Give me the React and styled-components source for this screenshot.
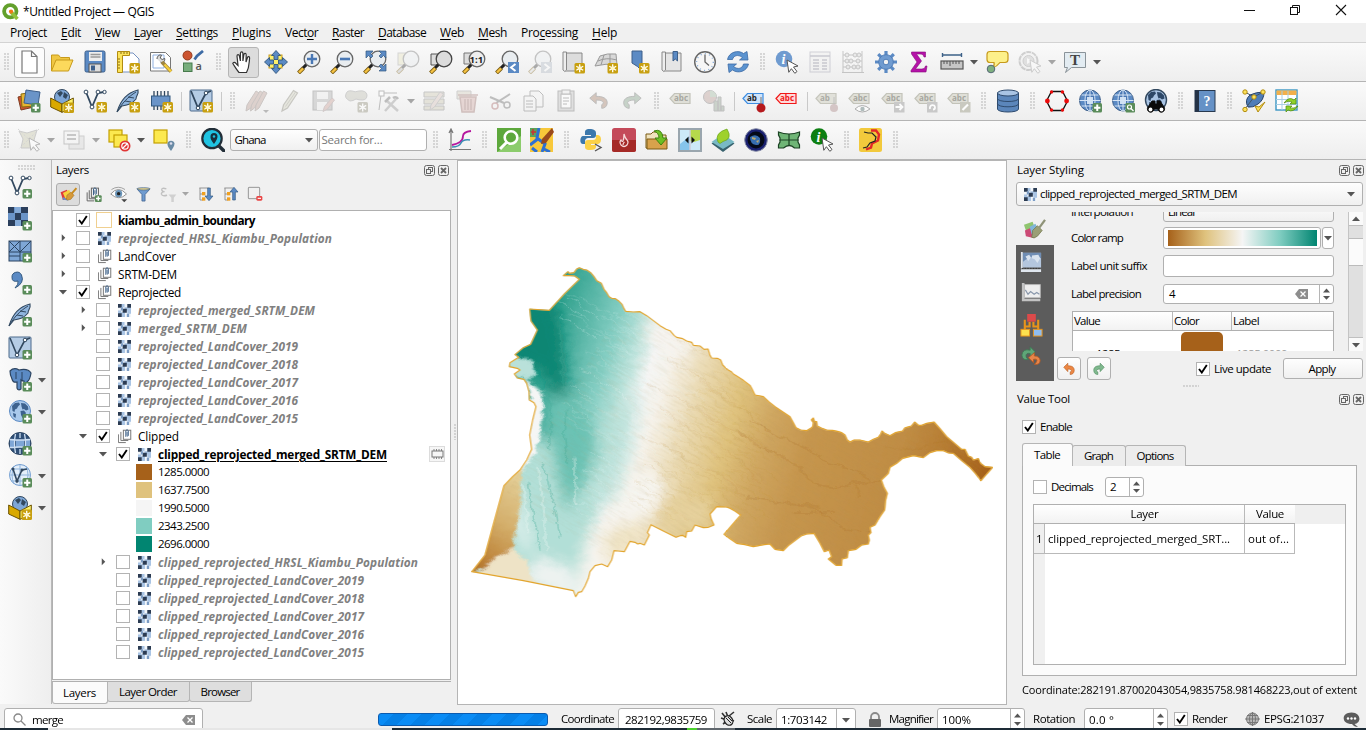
import React, { useLayoutEffect, useRef, useState } from "react";
import styled, { createGlobalStyle, css } from "styled-components";

const UI = `"Open Sans", "Noto Sans", sans-serif`;

const Global = createGlobalStyle`
  * { box-sizing: border-box; }
  body { margin: 0; background: #f0f0f0; font-family: ${UI}; font-size: 11.5px; line-height: 16px; color: #000; overflow: hidden; }
  svg { display: block; flex: none; }
`;

/* Text that is tracked to a given width, as the desktop font metrics are tighter. */
const FitSpan = styled.span`
  display: inline-block;
  flex: none;
  justify-self: start;
  white-space: pre;
  font-size: ${(p) => p.$size || 11.5}px;
  font-weight: ${(p) => (p.$bold ? 700 : 400)};
  font-style: ${(p) => (p.$italic ? "italic" : "normal")};
  color: ${(p) => p.$color || "inherit"};
  text-decoration: ${(p) => (p.$under ? "underline" : "none")};
  text-underline-offset: 2px;
`;

function Fit({ w, children, ...rest }) {
  const ref = useRef(null);
  const [track, setTrack] = useState(0);
  useLayoutEffect(() => {
    const el = ref.current;
    const n = el.textContent.length;
    setTrack((w - el.getBoundingClientRect().width) / n);
  }, [w]);
  return (
    <FitSpan ref={ref} {...rest} style={{ letterSpacing: track }}>
      {children}
    </FitSpan>
  );
}

/* ---------- icons ---------- */
const Star = ({ x = 13.5, y = 13 }) => (
  <g transform={`translate(${x} ${y})`}>
    <rect width="10.5" height="10.5" rx="1.5" fill="#c8a010" stroke="none" />
    <path d="M5.2 1.3v8M1.800 3.200l6.900 4M1.800 7.200l6.900-4" stroke="#fff" strokeWidth="1.3" />
    <circle cx="5.2" cy="5.2" r="1.9" fill="#fff6c8" stroke="none" />
  </g>
);
const Plus = ({ x = 14.5, y = 14 }) => (
  <g transform={`translate(${x} ${y})`}>
    <rect width="9.5" height="9.5" rx="1.5" fill="#5a8c5a" stroke="none" />
    <path d="M4.75 1.6v6.3M1.6 4.75h6.3" stroke="#fff" strokeWidth="2" />
  </g>
);
const Lens = ({ fill = "#e9edf0", stroke = "#666", handle = "#f5c242" }) => (
  <g>
    <path d="M1.5 23l5-5" stroke="#7a5c10" strokeWidth="4" />
    <path d="M2 22.500l4.500-4.500" stroke={handle} strokeWidth="2.4" />
    <path d="M6 18l3.600-3.600" stroke="#222" strokeWidth="3" />
    <circle cx="15" cy="9" r="7.8" fill={fill} stroke={stroke} strokeWidth="1.3" />
  </g>
);
const Arrow = ({ c = "#fff", s = "#555" }) => (
  <path d="M12 10l11 6-4.500 1 3.500 4.500-2.200 1.800-3.400-4.600-2.600 3.600z" fill={c} stroke={s} strokeWidth="1" />
);
const Globe = ({ r = 10.5 }) => (
  <g fill="none" stroke="#d5e4f5" strokeWidth="1">
    <circle cx="12" cy="11.5" r={r} fill="#5b8ac4" stroke="#3d5f8a" />
    <ellipse cx="12" cy="11.5" rx={r * 0.48} ry={r} fill="#4a78b4" />
    <path d="M9 8h6v7H9z" fill="#cfe0f3" stroke="none" />
    <path d={`M12 ${11.5 - r}v${2 * r}M${12 - r} 11.5h${2 * r}M3.500 6h17M3.500 17h17`} />
  </g>
);
const Continents = ({ c = "#2d4767" }) => (
  <path d="M4 6l3-3 4-.5 1 2-2 2-1 2-2 1-.5 2.500-2-1zM13 3l4 .5 3 3 .5 3-2.500 1-2-1.500-1.500.5-1-3zM12.500 11l3.500-.5 2 2.500-2 4-1.500 1-1.500-3zM5 13l3 1-.5 4-2-1.500z" fill={c} />
);
const Vec = ({ s = "#32485f" }) => (
  <g stroke={s} fill="#fff">
    <path d="M3 3l6 15 6-14 6-1" fill="none" strokeWidth="1.8" />
    <circle cx="3" cy="3" r="1.900" /><circle cx="9" cy="18" r="1.900" /><circle cx="15" cy="3" r="1.900" /><circle cx="21.500" cy="3" r="1.700" />
  </g>
);
const Feather = () => (
  <g>
    <path d="M1 23C4 13 9 4 22 1c1 4-2 6-2 9-4 5-8 6-14 7z" fill="#8fb4dd" stroke="#32485f" strokeWidth="1.1" />
    <path d="M1 23C6 14 12 8 20 3M9 12l6 1M12 8l6 1" stroke="#32485f" fill="none" />
  </g>
);
const Tag = ({ t = "abc", c = "#d9d9cf", s = "#b3b3a6", f = "#8d8d83" }) => (
  <g>
    <path d="M1 9.500L5.500 4.500H21v10H5.500z" fill={c} stroke={s} strokeWidth="1.200" />
    <text x="5" y="12.300" fontSize="8" fontWeight="700" fontFamily="Open Sans" fill={f}>{t}</text>
  </g>
);
const Folder = () => (
  <g stroke="#c79a1b">
    <path d="M1.500 21V5h7l2 2.500h9V11" fill="#f0c742" />
    <path d="M1.500 21L6 10h17l-4.500 11z" fill="#fcd95c" />
  </g>
);
const GeoBox = ({ badge = true }) => (
  <g>
    <circle cx="12" cy="8" r="7.500" fill="#7ea6d6" stroke="#32485f" />
    <path d="M7 4l4-2 2 2-3 4zM14 3l4 3-2 4-3-2z" fill="#32485f" />
    <path d="M0.700 9l11.300 6v8.300L.7 18z" fill="#d9a900" stroke="#6b5200" />
    <path d="M23.300 9L12 15v8.300L23.300 18z" fill="#fdf06a" stroke="#6b5200" />
    {badge && <Star x={13.500} y={13.500} />}
  </g>
);
const Raster = () => (
  <g>
    <rect width="14" height="14" fill="#f3f7fb" />
    <path d="M3.500 0H7v3.500H3.500zM7 3.500h7v3.500H7zM0 7h3.500v3.500H0zM3.500 9h4V14h-4zM10 7h4v3.500h-4z" fill="#a9c4e4" />
    <path d="M0 0h4v4H0zM10 0h4v4h-4zM0 10h4v4H0zM5 5h4.500v4.500H5z" fill="#2b3b52" />
    <path d="M3 3.500h2.500V7H3zM9.500 10.500H12V14H9.500z" fill="#7c9cc4" />
  </g>
);

const ICONS = {
  newdoc: <path d="M5 1h9.500L20 6.500V23H5zM14.500 1v5.500H20" fill="#fff" stroke="#777" strokeWidth="1.200" />,
  open: <Folder />,
  save: (
    <g><rect x="2" y="1" width="20" height="21" rx="1.500" fill="#5b8ac4" stroke="#3d5f8a" /><rect x="6" y="2" width="13" height="9" fill="#eee" /><path d="M7.500 4.500h10M7.500 7h10" stroke="#999" strokeWidth="1.400" /><rect x="6" y="14" width="12" height="8" fill="#ddd" stroke="#555" /><rect x="8" y="15.500" width="4" height="5" fill="#3d5f8a" /></g>
  ),
  layout: (
    <g><path d="M3 3h14l6 6v13H3z" fill="#fff" stroke="#7591c0" /><path d="M1.500 1.500h12v4h-7v17h-5z" fill="#fce45c" stroke="#b28c10" /><path d="M5 2v2M8 2v2M11 2v2M2 9h2M2 12h2M2 15h2M2 18h2" stroke="#8a6d10" /><Star /></g>
  ),
  layouts: (
    <g><path d="M1.500 2.500h15l5 5V21h-20z" fill="#fff" stroke="#777" /><path d="M4 5h11v13H4z" fill="none" stroke="#8fb0e0" /><path d="M8 9c0-3.500 3-4.500 4.500-3.800L11.200 8l2 1.500 2.500-1c.5 3-2 4.500-4.200 3.700" fill="#ddd" stroke="#555" /><path d="M13 12l9 9.500" stroke="#a08640" strokeWidth="3.800" /><path d="M15.500 14.500l6.500 7" stroke="#f6cf3c" strokeWidth="2.200" /></g>
  ),
  style: (
    <g><circle cx="5.500" cy="5.500" r="4.500" fill="#cc5430" stroke="#93391c" /><rect x="1.500" y="13" width="8.500" height="8.500" fill="#78ad7c" stroke="#477a4c" /><path d="M12.500 9.500l2.500-3.500L21 1" stroke="#3d6ba5" strokeWidth="2.800" fill="none" /><text x="13.500" y="19.500" fontSize="11" fontWeight="600" fontFamily="Open Sans" fill="#555">a</text></g>
  ),
  pan: <path d="M8 22.500C5 19 3.500 16 1.800 13.500c.5-1.700 2.400-1.300 3.700.5L7 15.500 6 6c.1-1.800 2-1.800 2.400 0l1 5V3.200c.2-1.900 2.400-1.800 2.500 0V11l1-6.500c.4-1.700 2.400-1.400 2.300.4L15 12l1.500-4.500c.6-1.500 2.300-1 2.100.6C18 13 18.500 17 15.500 22.500z" fill="#fff" stroke="#333" strokeWidth="1.200" />,
  pansel: (
    <g><rect x="5" y="5" width="13" height="13" fill="#fdf06a" stroke="#c79a1b" /><path d="M12 .5l4.500 5H14v4h-4v-4H7.500zM12 23.500l4.500-5H14v-4h-4v4H7.500zM.5 12l5-4.500V10h4v4h-4v2.500zM23.500 12l-5-4.500V10h-4v4h4v2.500z" fill="#5b8ac4" stroke="#32587f" strokeWidth=".9" /></g>
  ),
  zin: <g><Lens /><path d="M15 4v10M10 9h10" stroke="#4a78b4" strokeWidth="2.400" /></g>,
  zout: <g><Lens /><path d="M10 9h10" stroke="#4a78b4" strokeWidth="2.600" /></g>,
  zfull: <g><Lens /><path d="M3 1h7L7.500 3.500 10 6 8 8 5.500 5.500 3 8zM23 1h-7l2.500 2.500L16 6l2 2 2.500-2.500L23 8zM23 21h-7l2.500-2.500L16 16l2-2 2.500 2.500L23 14z" fill="#5b8ac4" stroke="#32587f" strokeWidth=".7" /></g>,
  zselD: <g opacity=".35"><rect x="2" y="3" width="10" height="12" fill="#e5e2b8" stroke="#999" /><Lens handle="#bbb" /></g>,
  zlayer: <g><path d="M2 4h9v11H2z" fill="#ddd" stroke="#555" /><Lens fill="#dcdcdc" stroke="#444" /></g>,
  znative: <g><path d="M2 3h9v11H2z" fill="#ddd" stroke="#777" /><Lens fill="#eee" /><text x="7.500" y="12.500" fontSize="9.500" fontWeight="700" fontFamily="Open Sans" fill="#222">1:1</text></g>,
  zlast: <g><Lens /><rect x="13" y="12" width="11" height="11" fill="#5b8ac4" /><path d="M20.500 14l-4.500 3.500 4.500 3.500" stroke="#fff" fill="none" strokeWidth="2" /></g>,
  znextD: <g opacity=".35"><Lens handle="#ddd" /><rect x="13" y="12" width="11" height="11" fill="#aab4c0" /><path d="M16.500 14l4.500 3.500-4.500 3.500" stroke="#fff" fill="none" strokeWidth="2" /></g>,
  newmap: <g stroke="#888"><path d="M5.500 3H21v18H4z" fill="#ddd" /><path d="M2 2h3.500v18q-1.500 3-3.500 0z" fill="#eee" /><Star /></g>,
  map3d: <g stroke="#999" fill="#d8d8d8"><path d="M6 6q7-3 16-2l1 11q-11-2-22 1z" /><path d="M4 11q8-4 19-1M10 5L7 15M16 4v10" fill="none" /><Star /></g>,
  bookmark: <g><path d="M5 1h10v20l-4.500-4.500L5 13z" fill="#5b8ac4" stroke="#3d5f8a" /><Star x={12} /></g>,
  bookmarks: <g><path d="M5.500 3H21v18H3.500" fill="#e5e5e5" stroke="#888" /><path d="M2 2h3.500v18q-1.500 3-3.500 0z" fill="#eee" stroke="#888" /><path d="M13 1.500h4.500V11l-2.200-2-2.300 2z" fill="#5b8ac4" stroke="#3d5f8a" /></g>,
  clock: <g><circle cx="12" cy="12" r="10.300" fill="#f6f6f6" stroke="#666" strokeWidth="1.400" /><circle cx="12" cy="12" r="8.300" fill="none" stroke="#7ea6d6" strokeDasharray="1 3.300" strokeWidth="1.200" /><path d="M12 4.500V12l4 3.500" stroke="#666" fill="none" strokeWidth="1.300" /></g>,
  refresh: <g fill="#5b93d0" stroke="#3d6ba5" strokeWidth=".8"><path d="M1.500 9.500C3 2 12-.5 17.500 3.500L21 1.500 22 10h-8.500l3-2.500C12 4 7.500 5.500 6.500 9.500zM22.500 14C21 21.500 12 24 6.500 20L3 22.500 2 14h8.500l-3 2.500c4.500 3.500 9 2 10-2.500z" /></g>,
  info: <g><circle cx="9" cy="9" r="8.300" fill="#6f9bd0" /><text x="6.500" y="14" fontSize="14" fontStyle="italic" fontWeight="700" fontFamily="Liberation Serif" fill="#fff">i</text><Arrow /></g>,
  tableD: <g opacity=".4"><rect x="2" y="2" width="20" height="20" fill="#eee" stroke="#99a" /><path d="M2 6h20M5 10h6M5 13h6M5 16h6M5 19h6M14 10h5M14 13h5M14 16h5M14 19h5" stroke="#889" strokeWidth="1.300" /></g>,
  abacusD: <g opacity=".5" fill="none" stroke="#999"><path d="M2 1v22M21 1v22M1 22.500h22M2 5h19M2 11h19M2 17h19" /><g fill="#ddd"><circle cx="6" cy="5" r="2" /><circle cx="14" cy="5" r="2" /><circle cx="18" cy="5" r="2" /><circle cx="6" cy="11" r="2" /><circle cx="10" cy="11" r="2" /><circle cx="17" cy="11" r="2" /><circle cx="7" cy="17" r="2" /><circle cx="13" cy="17" r="2" /><circle cx="17" cy="17" r="2" /></g></g>,
  gear: <g><path d="M12 1v22M1 12h22M4.200 4.200l15.600 15.600M19.800 4.200L4.200 19.800" stroke="#5b8ac4" strokeWidth="3.200" /><circle cx="12" cy="12" r="7.300" fill="#6f9bd0" stroke="#4f7db8" /><circle cx="12" cy="12" r="2.800" fill="#f2f2f2" stroke="#4f7db8" /></g>,
  sigma: <path d="M4.500 2h14v5h-1.500c-.5-2-1.500-3-4-3H9.500L14.500 11 8.500 19h6c2.500 0 3.500-1 4-3h1.500L19 22H4v-1.500L10 12 4.500 4z" fill="#b512a8" stroke="#840b7b" strokeWidth=".6" />,
  measure: <g><path d="M2 5h20M2.500 3v4M21.500 3v4" stroke="#3d6188" strokeWidth="1.400" /><rect x="1" y="11" width="22" height="8" fill="#c6c6c6" stroke="#555" strokeWidth="1.200" /><path d="M4 11v3M7 11v3M10 11v5M13 11v3M16 11v3M19 11v3" stroke="#555" /></g>,
  tips: <g><path d="M5 1.500h15q3 0 3 3v5q0 3-3 3h-5q-3 4-8 6 3-3 2-6H5q-3 0-3-3v-5q0-3 3-3z" fill="#fdf08a" stroke="#c79a1b" strokeWidth="1.200" /><circle cx="6" cy="19" r="3.800" fill="#7eb07e" stroke="#567" /></g>,
  actionD: <g opacity=".35"><circle cx="10.500" cy="11" r="9" fill="#eee" stroke="#888" strokeWidth="2" strokeDasharray="5 .7" /><circle cx="10.500" cy="11" r="5.500" fill="#bbb" stroke="#888" /><path d="M9 8l5 3-5 3z" fill="#fff" /><Arrow s="#888" /></g>,
  annot: <g><path d="M1.500 2.500h21v15h-14l-6 5 2-5h-3z" fill="#e3ecf2" stroke="#8a9399" /><text x="7" y="15" fontSize="15" fontFamily="Liberation Serif" fontWeight="700" fill="#444">T</text></g>,

  datasrc: <g><path d="M1 8l13-3 3 13-13 3z" fill="#cc5430" stroke="#7d3c20" /><path d="M4 5l13-2 1 14-13 1z" fill="#e5b432" stroke="#8a6d10" /><path d="M9 1l14 2-2 13-14-2z" fill="#6a94c8" stroke="#3d5f8a" /><Plus x={14} /></g>,
  geopkg: <GeoBox />,
  shp: <g><Vec /><Star /></g>,
  spatialite: <g><Feather /><Star /></g>,
  memory: <g><path d="M5 2v19M8.500 2v19M12 2v19M15.500 2v19M19 2v19" stroke="#32485f" strokeWidth="1.300" /><rect x="2.500" y="7" width="18.500" height="10" fill="#6a94c8" stroke="#32587f" /><Star /></g>,
  mesh: <g><rect x="1" y="1" width="22" height="21" rx="1" fill="#b5cce5" stroke="#4c6a8c" /><path d="M2 2l7 17 8-15 5-2" stroke="#32485f" fill="none" strokeWidth="1.800" /><circle cx="9" cy="19" r="1.800" fill="#fff" stroke="#32485f" /><circle cx="17" cy="4" r="1.800" fill="#fff" stroke="#32485f" /><Star /></g>,
  meshp: <g><rect x="1" y="1" width="22" height="21" rx="1" fill="#b5cce5" stroke="#4c6a8c" /><path d="M2 2l7 17 8-15 5-2" stroke="#32485f" fill="none" strokeWidth="1.600" /><circle cx="9" cy="19" r="1.800" fill="#fff" stroke="#32485f" /><circle cx="17" cy="4" r="1.800" fill="#fff" stroke="#32485f" /><Plus /></g>,
  pencilsD: <g opacity=".45" fill="#c3a8a0" stroke="#9a8f8a"><path d="M1 22l1-6L11 2l4 2.500L6 19z" /><path d="M5.500 22l1-6L15 2l3.500 2L9.500 19z" /><path d="M10 22l1-6L18.500 2 22 4 14 19z" /><path d="M18 21h6l-3 3z" fill="#777" stroke="none" /></g>,
  pencilD: <g opacity=".6"><path d="M4 22l1.500-6L15.500 1.500l4 2.500L9.500 19z" fill="#dcdccf" stroke="#aaa9a0" strokeWidth="1.200" /><path d="M7.500 17.500L17.500 3" stroke="#b9b9ae" /></g>,
  saveD: <g opacity=".45"><rect x="2" y="2" width="19" height="19" fill="#b5b5b5" stroke="#888" /><rect x="6" y="3" width="11" height="7" fill="#eee" /><rect x="6" y="13" width="10" height="8" fill="#eee" /><path d="M12 22.500l1.500-5L21 9l2.500 2-7 9z" fill="#d0aaa2" stroke="#a99" /></g>,
  polyD: <g opacity=".5"><path d="M2 5q1-4 6-3 3 1.500 7 0 7-1 8 4 0 5-5 5-3 0-6-1-3 2-6 2-6-3-4-7z" fill="#c9c9bf" stroke="#aaa" /><rect x="13.500" y="13" width="10.500" height="10.500" rx="1.500" fill="#a5a393" /><path d="M18.700 14.500v8M15.300 16.400l6.900 4M15.300 20.400l6.900-4" stroke="#fff" strokeWidth="1.400" /></g>,
  vertexD: <g opacity=".5" fill="none" stroke="#888"><path d="M5 4h15M4 6l-2 15" /><rect x="2" y="2" width="5" height="5" fill="#fff" /><path d="M8 22L19 10M10 12l11 10" strokeWidth="2.500" stroke="#aaa" /><path d="M8 13l5-5M16 9q3-2 5 1" strokeWidth="2.500" /></g>,
  modifyD: <g opacity=".5"><path d="M2 3h20v5H2zM2 10h20v5H2zM2 17h20v4H2z" fill="#d5d2c0" stroke="#999" /><path d="M8 21l1-5 9-13 3.500 2-9 13z" fill="#dcccc6" stroke="#aaa" /></g>,
  trashD: <g opacity=".5"><path d="M2 2h14v8H2z" fill="#dad6c8" stroke="#aaa" /><path d="M3 6h20M5 8h16l-2 15H7z" fill="#d9b9b5" stroke="#b08f8b" strokeWidth="1.500" /><path d="M10 10v11M13 10v11M16 10v11" stroke="#b08f8b" strokeWidth="1.500" /></g>,
  cutD: <g opacity=".5" stroke="#888" fill="none"><path d="M2 8l14 6M22 5L8 14" strokeWidth="2" /><circle cx="19" cy="16" r="3" strokeWidth="1.500" /><circle cx="7" cy="17" r="3" strokeWidth="1.500" stroke="#b88" /></g>,
  copyD: <g opacity=".5" fill="#f4f4f4" stroke="#888"><path d="M9 2h9l4 4v12H9z" /><path d="M3 7h9l3 3v12H3z" /><path d="M5 12h7M5 15h7M5 18h7" /></g>,
  pasteD: <g opacity=".5" stroke="#888"><rect x="4" y="2" width="16" height="20" fill="#ccc" /><rect x="7" y="5" width="10" height="14" fill="#fff" /><path d="M9 9h6M9 12h6M9 15h4" /><rect x="8" y="1" width="8" height="4" fill="#eee" /></g>,
  undoD: <path d="M3 10l7-6v4c7 0 12 2 12 7 0 4-3 6-6 6v-4c3-1 3-5-6-5v4z" transform="scale(.92)" fill="#d4c5bc" stroke="#bbb" />,
  redoD: <path d="M23 10l-7-6v4C9 8 4 10 4 15c0 4 3 6 6 6v-4c-3-1-3-5 6-5v4z" transform="scale(.92)" fill="#c6d2c8" stroke="#bbb" />,
  tagD: <g opacity=".75"><Tag /></g>,
  chartD: <g opacity=".55"><circle cx="8" cy="8" r="6.500" fill="#c9b3ae" stroke="#999" /><path d="M8 8V1.500A6.500 6.500 0 0 1 14.500 8z" fill="#b7c9b7" /><path d="M12 12h4v10h-4zM16 8h3v14h-3zM19 17h3v5h-3z" fill="#aab8aa" stroke="#999" /></g>,
  tagB: <g><Tag t="ab" c="#cfe4fb" s="#3f8de0" f="#222" /><path d="M19 8v9" stroke="#999" strokeWidth="1.500" /><circle cx="19" cy="19" r="4.500" fill="#b5191d" /></g>,
  tagR: <Tag c="#ffd9d9" s="#f01818" f="#f01818" />,
  tagPinD: <g opacity=".7"><Tag t="ab" /><path d="M19 8v9" stroke="#aaa" /><circle cx="19" cy="19" r="4" fill="#c8b3b3" /></g>,
  tagEyeD: <g opacity=".75"><Tag /><path d="M7 20q7-7 15 0-8 6-15 0z" fill="#fff" stroke="#999" /><circle cx="14.500" cy="20" r="2.200" fill="#9aa" /></g>,
  tagMoveD: <g opacity=".75"><Tag /><rect x="13" y="13" width="10.500" height="10.500" fill="#bbb" /><path d="M14.500 18h7m-3-3l3 3-3 3" stroke="#fff" fill="none" strokeWidth="1.800" /></g>,
  tagRotD: <g opacity=".75"><Tag /><rect x="13" y="13" width="10.500" height="10.500" fill="#bbb" /><path d="M16 20c-1-5 5-5 5-1.500 0 2-2 2-2 2" stroke="#fff" fill="none" strokeWidth="1.800" /></g>,
  tagEditD: <g opacity=".75"><Tag /><rect x="13" y="13" width="10.500" height="10.500" fill="#bcbcaf" /><path d="M15.500 21l5.500-5.500" stroke="#fff" strokeWidth="2.200" /></g>,
  db: <g stroke="#2f4b6e"><path d="M1.500 4v16c0 4 21 4 21 0V4z" fill="#5b86bb" /><ellipse cx="12" cy="4" rx="10.500" ry="3" fill="#a9c4e4" /><path d="M1.500 9.500c0 4 21 4 21 0M1.500 14.800c0 4 21 4 21 0" fill="none" /></g>,
  hex: <g><path d="M6.500 2.500h11L22.500 12l-5 9.500h-11L1.500 12z" fill="none" stroke="#111" strokeWidth="1.300" /><g fill="#ec0b0b"><circle cx="2.400" cy="12" r="2.400" /><circle cx="21.600" cy="12" r="2.400" /><circle cx="6.500" cy="3" r="1.700" /><circle cx="17.500" cy="3" r="1.700" /><circle cx="6.500" cy="21" r="1.700" /><circle cx="17.500" cy="21" r="1.700" /></g></g>,
  globeP: <g><Globe /><Plus /></g>,
  globeS: <g><Globe /><rect x="14.500" y="14" width="9.500" height="9.500" rx="1" fill="#5a8c5a" /><circle cx="18.500" cy="18" r="2" fill="none" stroke="#fff" strokeWidth="1.200" /><path d="M20 19.500l2.500 2.500" stroke="#fff" strokeWidth="1.200" /></g>,
  globeBin: <g><circle cx="12" cy="11" r="10.500" fill="#a9c4e4" stroke="#32485f" strokeWidth="1.400" /><Continents /><path d="M8 12h3v3h2v-3h3l4 6a3.300 3.300 0 1 1-6 2h-4a3.300 3.300 0 1 1-6-2z" fill="#0a0a0a" stroke="#0a0a0a" /><circle cx="6.500" cy="20.500" r="1.900" fill="#fff" /><circle cx="17.500" cy="20.500" r="1.900" fill="#fff" /></g>,
  help: <g><rect x="2" y="1.500" width="20" height="21" fill="#6591c6" stroke="#28394f" /><path d="M2 1.500h4v21H2z" fill="#243246" /><text x="10.500" y="17" fontSize="14" fontWeight="700" fontFamily="Liberation Serif" fill="#fff">?</text></g>,
  topo: <g><path d="M6 18q-4-7 2-12 6-3 14-3 0 8-6 12-5 4-10 3z" fill="#4f7db8" stroke="#28436a" /><path d="M3 3l9 5 9-5M3 20l9-12" stroke="#456" fill="none" /><g fill="#fde25c" stroke="#b28c10"><circle cx="3" cy="3" r="2.200" /><circle cx="21" cy="3" r="2.200" /><circle cx="12" cy="8" r="2.200" /><circle cx="3" cy="20.500" r="2.200" /><path d="M13 17l3 6 7-10-6 5z" /></g></g>,
  tableRef: <g><rect x="1" y="1" width="21" height="20" fill="#fff" stroke="#3b96c4" strokeWidth="1.400" /><path d="M1.500 1.500h20V6h-20z" fill="#f2b04b" /><path d="M1 10.500h21M1 15.500h21M7 2v19M13 2v19" stroke="#a9cfe4" /><path d="M9 14q5-7 10-3l2-2v6h-6l2-2q-4-2-8 1zM23 17q-5 7-10 4l-2 2v-6h6l-2 2q4 1 8-2z" fill="#8fd12a" stroke="#4d8a10" strokeWidth=".7" /></g>,

  selD: <g opacity=".55"><path d="M2 3l8 2 10-3-3 10 3 8H4l2-9z" fill="#d2d2bd" stroke="#aaa" /><path d="M1 1l22 21M22 1L2 21" stroke="#bbb" strokeDasharray="2 2" /><Arrow s="#888" /></g>,
  selvalD: <g opacity=".5"><rect x="7" y="8" width="15" height="13" fill="#ddd" stroke="#aaa" /><rect x="2" y="3" width="15" height="13" fill="#f4f4f4" stroke="#999" /><path d="M5 7h9M5 11h9" stroke="#999" strokeWidth="2" /></g>,
  desel: <g><rect x="2" y="2" width="13" height="12" fill="#fce94f" stroke="#c4a000" strokeWidth="1.200" /><rect x="7" y="7" width="13" height="12" fill="#fce94f" stroke="#c4a000" strokeWidth="1.200" /><circle cx="18" cy="18" r="5.500" fill="#e03535" /><circle cx="18" cy="18" r="3.200" fill="none" stroke="#fff" strokeWidth="1.200" /><path d="M15.500 20.500l5-5" stroke="#fff" strokeWidth="1.200" /></g>,
  selloc: <g><rect x="2" y="2" width="13" height="13" fill="#fce94f" stroke="#c4a000" strokeWidth="1.200" /><path d="M19 23q-4-5-3.500-7.500a3.600 3.600 0 0 1 7 0q0 2.500-3.500 7.500z" fill="#6a8ba5" /><circle cx="19" cy="15.500" r="1.300" fill="#dde" /></g>,
  osm: <g><circle cx="11" cy="10.500" r="9.700" fill="#1fc3e2" stroke="#222e38" strokeWidth="2.200" /><path d="M18 18l6 6" stroke="#222e38" strokeWidth="3.400" /><path d="M13 16q-4-5-3.500-7.500a3.500 3.500 0 0 1 7 0q0 2.500-3.500 7.500z" fill="#17303d" /><circle cx="13" cy="8.500" r="1.200" fill="#1fc3e2" /></g>,
  plot: <g fill="none"><path d="M3 23V1M1 21.500h22M1 5l2-4 2 4" stroke="#777" strokeWidth="1.200" /><path d="M4 17q5-1 8-3t3-6 8-5" stroke="#b5179e" strokeWidth="1.800" /><path d="M4 19q7 0 9-4t9-3" stroke="#3b8fb5" strokeWidth="1.600" /></g>,
  gsearch: <g><rect width="24" height="24" fill="#5da83c" /><path d="M0 24L24 8v16z" fill="#8ccc6c" /><circle cx="14" cy="9.500" r="6.300" fill="none" stroke="#fff" strokeWidth="2.600" /><path d="M9.500 14.500L3 21" stroke="#fff" strokeWidth="3" /></g>,
  osmdl: <g><rect width="23" height="24" fill="#f8c83a" /><path d="M0 0h8v9H0z" fill="#5ba35b" /><path d="M1 4h5M3 1v6" stroke="#c33" strokeWidth="1.500" /><path d="M9 0l-2 10 8 6-3 8M0 17l9-7" stroke="#2d70d2" strokeWidth="3" fill="none" /><path d="M2 20l5 4M14 21l6 3" stroke="#2d70d2" strokeWidth="3" /><path d="M22 0L12 11l-1 5 5-1L24 4z" fill="#99491c" /></g>,
  python: <g><path d="M11 1c-5 0-5 2-5 4v2h6v1H4c-3 0-4 8 0 8h2v-3c0-2 2-3 3-3h5c2 0 3-1 3-3V5c0-3-3-4-6-4z" fill="#3c78ac" /><path d="M11 22c-5 0-5-2-5-4v-3c0-2 1-3 3-3h5c2 0 3-1 3-3V7h2c4 0 4 9 0 9h-7v1h5v2c0 2-2 3-6 3z" fill="#fbd146" /><path d="M16 16l6 3.500-6 3.500" stroke="#555" fill="none" strokeWidth="1.400" /></g>,
  fire: <g><rect width="24" height="24" rx="2.500" fill="#c44a5a" /><path d="M0 12h24v9.500q0 2.500-2.500 2.500h-19Q0 24 0 21.500z" fill="#a52a26" /><path d="M12 6q1 4 3 6t0 5q-3 3-6 0-2-3 0-5 1 2 2 1 1-3 1-7zM11 17q0-2 1.500-3" stroke="#f7dcdc" fill="none" strokeWidth="1.200" /></g>,
  importf: <g stroke="#7a5a14"><path d="M1 20V6h5l2-2h7v3h6v13z" fill="#efe2bd" /><path d="M2 21V11h20v10z" fill="#d8a24c" /><path d="M9 3q8-3 9 7h4l-6 7-6-7h4q0-5-5-7z" fill="#6cc024" stroke="#3f8210" /></g>,
  swipe: <g><rect x="1" y="1" width="22" height="22" fill="#cde9f8" stroke="#9aa6ae" strokeWidth="2" /><path d="M2 16L12 8v14H2z" fill="#86c4ec" /><path d="M12 2h10v10l-6 2-4-1z" fill="#b6d94c" /><path d="M12 2v20" stroke="#ccd" strokeWidth="1.500" /><path d="M10.500 8.500v7L7 12zM13.500 8.500v7l3.500-3.500z" fill="#111" /></g>,
  leaf: <g><path d="M12 9l11.500 6.500L12 24 .5 15.500z" fill="#38626e" /><path d="M12 6l11.500 8L12 21 .5 14z" fill="#79b9c4" /><path d="M7 14Q3 5 16 1q6 10-4 12.500l-3 2z" fill="#9ed12c" stroke="#5d9c12" strokeWidth=".6" /></g>,
  earth: <g><circle cx="12" cy="12" r="11.300" fill="#1a2070" stroke="#8a90a8" /><circle cx="12" cy="12" r="8.500" fill="#050a18" /><path d="M6 9q6-4 10 1 1 8-4 7-6-1-6-8z" fill="#376eaf" /><path d="M8 9l4 1-1 2-3-1zM12 13l3-1-1 3z" fill="#b7a873" /></g>,
  bridge: <g fill="#6fb576" stroke="#1c4224" strokeWidth="1.200"><path d="M1.500 4q5 2 10.500 2t10.500-2v3l-1.500 3v4l1.500 3v3h-5q-5-5-11 0h-5v-3L3 14v-4L1.500 7z" /><path d="M2.500 12h19M12 6v11" fill="none" /></g>,
  infoG: <g><circle cx="9" cy="8.500" r="8.300" fill="#0d7f12" /><text x="6.500" y="13.500" fontSize="14" fontStyle="italic" fontWeight="700" fontFamily="Liberation Serif" fill="#fff">i</text><Arrow /></g>,
  route: <g><rect width="23" height="24" rx="2.500" fill="#f2c93c" /><path d="M12 2.500h5l3 4-1 6-6 3-1 4-5 2" stroke="#e22828" strokeWidth="2.400" fill="none" /><path d="M5 4l4 1h4l4 4-1 4-5 2-3 4-4 1" stroke="#222" strokeWidth="1.200" fill="none" /></g>,

  vecp: <g><Vec /><Plus /></g>,
  rastp: <g><path d="M0 0h20v19H0z" fill="#6a94c8" /><path d="M0 0h6v6H0zM13 0h7v6h-7zM7 6h6v7H7zM0 13h7v6H0zM13 13h7v6h-7z" fill="#2b3f5c" /><path d="M7 0h6v6H7zM7 13h6v6H7z" fill="#85abd8" /><Plus /></g>,
  meshl: <g stroke="#2b4360"><rect x="1" y="2" width="22" height="20" fill="#7ea6d6" /><path d="M1 13h22M12 2v20M1 2l11 11M12 2L1 13M23 2L12 13M1 17h11" fill="none" /><Plus /></g>,
  csv: <g><path d="M4 6.500a5 5 0 0 1 9.500-2.500q3.500 8-6.500 13 4-4 3-7-6 1.500-6-3.500z" fill="#5b8ac4" stroke="#32587f" /><Plus /></g>,
  feap: <g><Feather /><Plus /></g>,
  pg: <g><path d="M2 3q4-4 9-1 9-2 12 3-1 7-4 9v6h-3V13q-2 0-3-1v9q-3 2-4-1v-6q-4 1-5-3-2-4-2-8z" fill="#5b8ac4" stroke="#2b4360" strokeWidth="1.200" /><path d="M8 4v7M14 4v8" stroke="#2b4360" /><Plus /></g>,
  wms: <g><circle cx="12" cy="11" r="10.500" fill="#a9c9ec" stroke="#5b8ac4" /><Continents c="#3d628f" /><Plus /></g>,
  wcs: <g><circle cx="12" cy="11.500" r="11" fill="#2f4f77" stroke="#2b4360" /><path d="M8 8h8v7H8zM2 8h5v7H2zM17 8h5v7h-5z" fill="#7ea6d6" /><path d="M1.500 7.500q10 1 21 0M1.500 15.500q10-1 21 0M12 1v5M12 17v5M7.500 2q-2 9 0 19M16.500 2q2 9 0 19" stroke="#cfe0f3" fill="none" strokeWidth="1.300" /><Plus /></g>,
  wfs: <g><circle cx="12" cy="11" r="10.500" fill="#e4effa" stroke="#6f9bd0" /><path d="M1 11h22M12 1v21M3 5h18M3 17h18M6 2q-4 9 0 18M18 2q4 9 0 18" stroke="#8fb4dd" fill="none" /><path d="M5 5l4 12 5-11 5-1" stroke="#32485f" strokeWidth="1.600" fill="none" /><circle cx="5" cy="5" r="1.500" fill="#32485f" /><circle cx="9" cy="17" r="1.700" fill="#32485f" /><circle cx="14" cy="6" r="1.500" fill="#32485f" /><Plus /></g>,

  brush: <g><path d="M2 9l8-3 4 10-9 3z" fill="#e03a3a" /><path d="M6 15l-2 3 8 2z" fill="#5f8fd0" /><path d="M5 10l8-4 3 8-8 3z" fill="#f7d13c" /><path d="M10 13l5-4 4 4-4 5q-5 2-6 0 1-2 1-5z" fill="#d79a3a" stroke="#9a6c20" strokeWidth=".7" /><path d="M16 11l6-7" stroke="#c98a1c" strokeWidth="2.400" /></g>,
  brushG: <g><path d="M1 7l9-3 3 8-9 4z" fill="#8fc56f" /><path d="M2 13l7-3 3 11-9-2z" fill="#cc4a76" /><path d="M7 9l6-3 3 7-7 4z" fill="#7fb5d8" /><path d="M10 13l5-5 5 5-5 6q-4 3-6 1 1-3 1-7z" fill="#9a9f76" stroke="#74784f" strokeWidth=".8" /><path d="M17 10l6-8" stroke="#8f9378" strokeWidth="2.400" /></g>,
  group: <g fill="none" stroke="#777" strokeWidth="1.200"><path d="M1.500 9v10h9M4.500 6v10.500h9" /><rect x="7.500" y="4" width="9" height="11" /><path d="M10.500 12V4.500q1.500-2.500 3 0v6q-1 2-1.500-.5V6" stroke="#3d6188" /></g>,
  groupp: <g><g fill="none" stroke="#666" strokeWidth="1.400"><path d="M3 9v12h10M6 6v12h10" /><rect x="9" y="3" width="10" height="13" /><path d="M12 13V4q2-3 4 0v7q-1 2-2-.5V6" stroke="#3d6188" /></g><Plus x={14} y={13} /></g>,
  eye: <g><path d="M1 12q10-12 21 0-10 10-21 0z" fill="#fff" stroke="#888" strokeWidth="1.200" /><circle cx="11.500" cy="11.500" r="4.800" fill="#6a94b8" /><circle cx="11.500" cy="11.500" r="2.300" fill="#222" /><path d="M2 6q9-6 18 0" stroke="#888" fill="none" /><path d="M15 19h8l-4 4z" fill="#444" /></g>,
  filter: <g><path d="M1.500 3L9.500 12v10.500h5V12l8-9z" fill="#6f9bd0" stroke="#3d628f" strokeWidth="1.200" /><ellipse cx="12" cy="3" rx="10.500" ry="2" fill="#d9c98a" stroke="#3d628f" /></g>,
  epsD: <g opacity=".45"><path d="M9 4Q2 2 2.500 5.500 3 8 6.500 8 1.500 8.500 2 11.500 3 15 10 13" stroke="#888" strokeWidth="2" /><path d="M12 12h11l-3.500 4.500v6h-3.500v-6z" fill="#aaa" /></g>,
  expand: <g><path d="M2 3h14M3 3v18h4M3 12h4" stroke="#888" fill="none" strokeWidth="1.300" /><rect x="6" y="9" width="5" height="5" fill="#f0a020" /><rect x="6" y="17" width="5" height="5" fill="#f0a020" /><path d="M14.500 3h4v12h4L16.500 22l-6-7h4z" fill="#5b8ac4" stroke="#32587f" /></g>,
  collapse: <g><path d="M2 3h14M3 3v18h4M3 12h4" stroke="#888" fill="none" strokeWidth="1.300" /><rect x="6" y="9" width="5" height="5" fill="#f0a020" /><rect x="6" y="17" width="5" height="5" fill="#f0a020" /><path d="M14.500 21h4V9h4L16.500 2l-6 7h4z" fill="#5b8ac4" stroke="#32587f" /></g>,
  remove: <g><rect x="2" y="2" width="17" height="17" rx="1" fill="none" stroke="#888" strokeWidth="1.300" /><rect x="14" y="15" width="9" height="7" rx="2" fill="#e84545" /><path d="M16 18.500h5" stroke="#fff" strokeWidth="1.700" /></g>,
  transp: <g><rect x="3" y="2" width="20" height="16" fill="#b4c6de" /><path d="M3 2h20v6Q12 4 3 12z" fill="#6f8db4" /><path d="M6 6l4-2 2 3-3 4zM13 5l7-1 2 4-3 5-3-4-3-1z" fill="#d9e3ef" /><path d="M1 1h2v18H1zM1 20h22v3H1z" fill="#dfe6ee" /><path d="M2 19h20" stroke="#333" strokeDasharray="1.500 1.500" /></g>,
  histo: <g><path d="M1 1h3v18h18v3H1z" fill="#c3c3c3" /><rect x="4" y="3" width="18" height="15" fill="#eee" stroke="#bbb" /><path d="M5 9l3 5 3-3 4 3 3-2 3 2" fill="none" stroke="#8896aa" strokeWidth="1.300" /></g>,
  render3: <g><path d="M10 8v5H5v4M14 8v5h5v4M5 6v9M19 6v9" stroke="#e8941a" strokeWidth="2.200" fill="none" /><rect x="7.500" y="0" width="9" height="8" fill="#dc4a4a" /><rect x="1" y="16" width="9" height="7" fill="#fce04f" stroke="#e8941a" /><rect x="14" y="16" width="9" height="7" fill="#8fbdf0" stroke="#e8941a" /></g>,
  hist2: <g><path d="M1 11q1-8 10-6V1l6 6-6 6V9q-5-1-5 3 0 3 3 4-7 2-8-5z" fill="#5fa678" stroke="#3d7a53" /><path d="M23 17q-1-5-7-5V8l-7 6 6 6v-4q5-1 4 2-1 3-3 4 7 1 7-5z" fill="#e8854a" stroke="#b55a24" /></g>,
  undo: <path d="M3 9l7-7v4.500c7 0 11 2 11 8 0 4-3 7-7 7V17c3 0 4-5-4-5v4.500z" fill="#ec8643" stroke="#b55f25" />,
  redo: <path d="M21 9l-7-7v4.500c-7 0-11 2-11 8 0 4 3 7 7 7V17c-3 0-4-5 4-5v4.500z" fill="#7fb88e" stroke="#4c8a5c" />,
};

const Icon = ({ n, s = 24 }) => (
  <svg width={s} height={s} viewBox="0 0 24 24" fill="none">{ICONS[n]}</svg>
);

const Tri = ({ c = "#555", w = 8, dir = "down" }) => {
  const d = { down: "M0 1h8L4 5.500z", up: "M0 5h8L4 .5z", right: "M2 -1v8l4-4z" }[dir];
  return <svg width={w} height={w * 0.75} viewBox="0 0 8 6" overflow="visible"><path d={d} fill={c} /></svg>;
};

/* ---------- frame ---------- */
const Window = styled.div`width: 1366px; height: 730px; display: flex; flex-direction: column; background: #f0f0f0; overflow: hidden;`;
const TitleBar = styled.header`height: 23px; background: #fff; display: flex; align-items: center; padding-left: 2px; flex: none;`;
const WinButtons = styled.div`margin-left: auto; display: flex; align-items: center; gap: 34px; padding-right: 19px; height: 21px; margin-top: -3px;`;
const MenuBar = styled.nav`height: 20px; display: flex; gap: 14px; padding: 2px 10px 0; border-bottom: 1px solid #d3d3d3; flex: none;`;
const Bar = styled.div`
  height: 39px; flex: none; display: flex; align-items: center;
  background: linear-gradient(#fafafa, #eeeeee); border-bottom: 1px solid #b4b4b4;
`;
const dots = css`
  background-image: radial-gradient(circle at 1px 1px, #b4b4b4 0.5px, transparent 0.9px);
  background-size: 3px 3px;
`;
const HandleBox = styled.div`width: ${(p) => p.$w || 16}px; flex: none; display: flex; justify-content: center; &::before { content: ""; width: 5px; height: 18px; ${dots} }`;
const Tool = styled.div`
  width: 33px; height: 31px; flex: none; display: grid; place-items: center;
  ${(p) => p.$frame && css`border: 1px solid #b5b5b5; border-radius: 3px; width: 31px; margin: 0 1px; background: ${p.$frame};`}
`;
const Drop = styled.div`width: ${(p) => p.$w || 12}px; flex: none; display: flex; justify-content: center; padding-right: 2px;`;
const Sep = styled.div`width: 7px; flex: none; height: 19px; display: flex; justify-content: center; &::before { content: ""; width: 1px; background: #c9c9c9; }`;
const Field = styled.div`
  height: ${(p) => p.$h || 22}px; width: ${(p) => p.$w}px; flex: none; border: 1px solid #b0b0b0; border-radius: 3px;
  background: ${(p) => (p.$btn ? "linear-gradient(#fefefe,#f0f0f0)" : "#fff")};
  display: flex; align-items: center; justify-content: ${(p) => p.$justify || "space-between"}; padding: ${(p) => p.$pad || "0 4px"};
`;

const Toolbar = ({ items }) => (
  <Bar>
    <HandleBox $w={12.5} />
    {items.map((it, i) => {
      if (it === "|") return <Sep key={i} />;
      if (it === "::") return <HandleBox key={i} />;
      if (it === "v" || it === "V") return <Drop key={i}><Tri c={it === "v" ? "#a5a5a5" : "#555"} /></Drop>;
      if (typeof it !== "string") return <React.Fragment key={i}>{it}</React.Fragment>;
      const frame = it === "newdoc" ? "#fcfcfc" : it === "pan" ? "#dcdcdc" : undefined;
      return <Tool key={i} $frame={frame}><Icon n={it} /></Tool>;
    })}
  </Bar>
);

const Body = styled.div`flex: 1; min-height: 0; display: flex;`;
const LeftBar = styled.aside`
  width: 52px; display: flex; flex-direction: column; padding: 5px 0 0 4px; border-right: 1px solid #b9b9b9;
  background: linear-gradient(90deg, #fafafa, #eeeeee); height: 544px;
  &::before { content: ""; width: 17px; height: 5px; margin: 0 0 1px 14px; ${dots} }
`;
const LeftItem = styled.div`height: 32.1px; display: flex; align-items: center; gap: 6px; padding-left: 4px;`;

const Dock = styled.section`width: ${(p) => p.$w}px; flex: none; display: flex; flex-direction: column;`;
const DockTitle = styled.div`height: 21px; flex: none; display: flex; align-items: center; justify-content: space-between; padding: 0 ${(p) => p.$r || 2}px 1px ${(p) => p.$l || 4}px;`;
const Pair = styled.div`display: flex; gap: 3px;`;
const DockBtns = () => (
  <Pair>
    <svg width="11" height="11" viewBox="0 0 11 11" fill="none" stroke="#666"><rect x=".5" y=".5" width="10" height="10" rx="2" /><rect x="4.500" y="2.500" width="4" height="4" /><rect x="2.500" y="4.500" width="4" height="4" fill="#f0f0f0" /></svg>
    <svg width="11" height="11" viewBox="0 0 11 11" fill="none" stroke="#666"><rect x=".5" y=".5" width="10" height="10" rx="2" /><path d="M3 3l5 5M8 3L3 8" strokeWidth="1.800" /></svg>
  </Pair>
);
const TreeTools = styled.div`height: 29px; display: flex; align-items: center; padding: 0 0 3px 4px; flex: none;`;
const TreeTool = styled.div`
  width: ${(p) => p.$w || 25}px; height: 23px; display: grid; place-items: center; flex: none;
  ${(p) => p.$on && css`border: 1px solid #adadad; border-radius: 3px; background: #dcdcdc;`}
`;
const Tree = styled.div`height: 470px; border: 1px solid #b0b0b0; background: #fff; width: 399px; flex: none;`;
const Row = styled.div`height: 18px; display: flex; align-items: center; padding-left: ${(p) => 4 + p.$lvl * 20}px; padding-right: 5px;`;
const Toggle = styled.div`width: 12px; margin-right: 7px; display: grid; place-items: center; flex: none;`;
const Box = styled.div`width: 14px; height: 14px; flex: none; border: 1px solid #b3b3b3; background: #fff; display: grid; place-items: center;`;
const IconSlot = styled.div`width: 28px; flex: none; display: flex; padding-left: 8px;`;
const LegendSwatch = styled.div`width: 16px; height: 16px; flex: none; margin: 0 6px 0 23px; background: ${(p) => p.$c};`;
const Outline = styled.div`width: 16px; height: 16px; margin-left: -2px; border: 1px solid #f0d090;`;
const ChipBox = styled.div`margin-left: auto; width: 16px; height: 16px; border: 1px solid #dcdcdc; background: #f6f6f6; display: grid; place-items: center;`;

const Check = ({ on }) => (
  <Box>{on && <svg width="10" height="10" viewBox="0 0 10 10"><path d="M1 5l2.800 3.500L8.800 1" stroke="#000" strokeWidth="1.900" fill="none" /></svg>}</Box>
);

const gray = "#808080";
const lc = (pre, lvl, w) => [2019, 2018, 2017, 2016, 2015].map((y) => ({ lvl, t: `${pre}reprojected_LandCover_${y}`, w, i: "raster", off: 1 }));
const TREE = [
  { lvl: 0, on: 1, i: "outline", t: "kiambu_admin_boundary", w: 137, bold: 1 },
  { lvl: 0, a: "right", i: "raster", t: "reprojected_HRSL_Kiambu_Population", w: 214, off: 1 },
  { lvl: 0, a: "right", i: "group", t: "LandCover", w: 58 },
  { lvl: 0, a: "right", i: "group", t: "SRTM-DEM", w: 59 },
  { lvl: 0, a: "down", on: 1, i: "group", t: "Reprojected", w: 63 },
  { lvl: 1, a: "right", i: "raster", t: "reprojected_merged_SRTM_DEM", w: 177, off: 1 },
  { lvl: 1, a: "right", i: "raster", t: "merged_SRTM_DEM", w: 109, off: 1 },
  ...lc("", 1, 160),
  { lvl: 1, a: "down", on: 1, i: "group", t: "Clipped", w: 41 },
  { lvl: 2, a: "down", on: 1, i: "raster", t: "clipped_reprojected_merged_SRTM_DEM", w: 229, bold: 1, under: 1, chip: 1 },
  { c: "#a6611a", t: "1285.0000" },
  { c: "#dfc27d", t: "1637.7500" },
  { c: "#f5f5f5", t: "1990.5000" },
  { c: "#80cdc1", t: "2343.2500" },
  { c: "#018571", t: "2696.0000" },
  { lvl: 2, a: "right", i: "raster", t: "clipped_reprojected_HRSL_Kiambu_Population", w: 260, off: 1 },
  ...lc("clipped_", 2, 206),
];
const TreeIcon = ({ i }) => {
  if (i === "outline") return <Outline />;
  if (i === "raster") return <svg width="13" height="13" viewBox="0 0 14 14"><Raster /></svg>;
  return <svg width="14" height="16" viewBox="1 2 17 18">{ICONS.group}</svg>;
};
const TreeRow = ({ r }) =>
  r.c ? (
    <Row $lvl={2.8}><LegendSwatch $c={r.c} /><Fit w={51} $size={11.5}>{r.t}</Fit></Row>
  ) : (
    <Row $lvl={r.lvl}>
      <Toggle>{r.a && <Tri dir={r.a} w={r.a === "down" ? 8 : 7} />}</Toggle>
      <Check on={r.on} />
      <IconSlot><TreeIcon i={r.i} /></IconSlot>
      <Fit w={r.w} $bold={r.bold || r.off} $italic={r.off} $color={r.off ? gray : "#000"} $under={r.under} $size={11.8}>{r.t}</Fit>
      {r.chip && <ChipBox><svg width="13" height="10" viewBox="0 0 13 10"><path d="M3 0v10M5.500 0v10M8 0v10M10.500 0v10" stroke="#888" /><rect x="1" y="2" width="11" height="6" fill="#f6f6f6" stroke="#777" /></svg></ChipBox>}
    </Row>
  );

const Tabs = styled.div`display: flex; align-items: flex-start; margin-top: 1px; border-top: 1px solid #b0b0b0; width: 399px;`;
const Tab = styled.div`
  height: ${(p) => p.$h}px; width: ${(p) => p.$w}px; display: flex; align-items: center; justify-content: center; border: 1px solid #b5b5b5;
  background: ${(p) => (p.$on ? "#fbfbfb" : p.$bg || "#dedede")}; padding: 0 1px 0 0;
  ${(p) => (p.$bottom ? "border-top: 0; border-radius: 0 0 3px 3px;" : "border-bottom: 0; border-radius: 3px 3px 0 0;")}
  margin-left: ${(p) => (p.$first ? 0 : -1)}px;
`;

const Splitter = styled.div`width: 5px; flex: none; display: flex; align-items: center; justify-content: center; height: 544px; &::before { content: ""; width: 2px; height: 16px; ${dots} }`;
const MapFrame = styled.main`width: 550px; height: 545px; flex: none; background: #fff; border: 1px solid #b5b5b5; svg { width: 548px; height: 543px; }`;

const OUTLINE = "310,77 324,65 328,70 342,68 350,57 358,53 372,59 380,60 392,68 402,80 410,92 424,100 432,118 440,128 447,140 455,145 466,146 475,152 486,163 492,176 497,184 520,186 540,185 560,197 580,212 600,227 618,238 630,242 642,256 650,262 668,266 680,273 695,277 700,286 720,288 732,298 744,297 750,316 755,324 772,325 782,330 788,345 795,352 806,361 815,366 820,372 830,378 850,391 870,406 875,415 885,435 910,440 926,455 945,470 972,488 990,500 1000,518 1008,533 1022,540 1040,542 1052,535 1058,530 1060,518 1054,510 1060,504 1064,515 1070,515 1072,528 1084,534 1100,540 1118,541 1132,544 1145,548 1155,555 1162,570 1170,576 1182,570 1200,570 1225,576 1240,568 1255,562 1262,552 1266,543 1274,550 1290,557 1306,548 1328,543 1334,534 1340,532 1354,528 1364,516 1376,526 1385,526 1400,520 1422,516 1440,536 1460,560 1484,580 1505,598 1515,598 1525,618 1535,622 1540,630 1555,626 1562,640 1575,650 1598,652 1580,672 1563,692 1546,670 1530,652 1505,632 1480,610 1466,609 1450,602 1430,602 1410,608 1390,623 1375,620 1360,617 1328,625 1310,640 1290,652 1285,670 1264,690 1272,712 1282,730 1277,750 1274,780 1260,800 1245,825 1230,832 1233,848 1225,855 1228,870 1225,882 1205,885 1188,898 1165,902 1162,923 1146,927 1145,946 1128,946 1105,927 1115,920 1107,900 1093,905 1080,880 1062,850 1040,852 1025,857 1005,872 985,887 970,902 945,898 930,882 912,884 880,890 855,884 830,880 810,866 792,853 842,795 826,784 810,775 800,771 770,770 750,792 754,808 762,825 745,832 730,833 705,825 695,843 680,845 677,862 668,856 660,857 648,862 610,843 573,824 562,848 568,855 553,885 540,880 533,882 525,877 510,874 493,905 475,903 462,902 455,930 443,950 425,942 405,947 390,965 385,985 375,1008 365,1025 355,1027 347,1040 340,1022 190,992 36,965 75,915 105,805 132,707 158,680 180,660 200,630 215,598 209,555 218,510 228,470 222,458 208,450 207,425 200,400 192,388 172,384 163,372 180,360 172,355 148,350 150,338 176,322 165,314 190,293 212,283 232,240 213,213 209,177 268,181 314,131 358,88 344,78 330,77";

/* Drainage lines that fan out over the eastern slope. */
const RIVERS = [
  "M830 540L900 590L960 615L1020 655L1060 700L1120 712L1180 700L1262 695",
  "M870 510L960 560L1050 600L1110 640L1190 660L1230 690",
  "M860 740L980 760L1070 775L1130 820L1170 845L1235 845",
  "M1010 760L1080 770M1000 790L1120 785M1190 705L1200 740",
  "M1280 590L1350 600L1400 590M1420 580L1460 570L1500 620L1560 660",
  "M560 400L640 440L720 480L790 530L870 560L930 600",
  "M620 330L700 370L770 430L850 480L920 540",
  "M540 560L620 590L700 640L790 680L850 740",
  "M600 470L690 540L760 570L850 640L900 700",
];
const VALLEYS = Array.from({ length: 130 }, (_, i) => {
  const x = 290 + ((i * 137) % 560);
  const y = 110 + ((i * 89) % 660);
  const l = 45 + ((i * 31) % 60);
  return { east: x * 0.954 + y * 0.298 > 690, d: `M${x} ${y}l${l * 0.4} ${l * 0.12}l${l * 0.3} ${l * 0.34}l${l * 0.5} ${l * 0.2}l${l * 0.3} ${l * 0.3}` };
});

const ReliefMap = () => (
  <svg viewBox="458 161 548 543">
    <defs>
      <linearGradient id="elev" gradientUnits="userSpaceOnUse" x1="0" y1="0" x2="1639" y2="512">
        <stop offset=".15" stopColor="#128c78" />
        <stop offset=".2" stopColor="#36a592" />
        <stop offset=".25" stopColor="#5cb8a9" />
        <stop offset=".3" stopColor="#86cfc4" />
        <stop offset=".345" stopColor="#bfe4dd" />
        <stop offset=".378" stopColor="#f5f6f5" />
        <stop offset=".41" stopColor="#f6f2ea" />
        <stop offset=".475" stopColor="#ead9b0" />
        <stop offset=".545" stopColor="#dfc27d" />
        <stop offset=".61" stopColor="#cfa660" />
        <stop offset=".68" stopColor="#c6964e" />
        <stop offset=".84" stopColor="#c08d44" />
        <stop offset=".91" stopColor="#b77d33" />
        <stop offset="1" stopColor="#a6611a" />
      </linearGradient>
      <linearGradient id="rift" x1="0.700" y1="0" x2="0.300" y2="1">
        <stop offset="0" stopColor="#e3cd95" />
        <stop offset=".45" stopColor="#d3ad69" />
        <stop offset=".8" stopColor="#bd8238" />
        <stop offset="1" stopColor="#b07026" />
      </linearGradient>
      <clipPath id="county"><polygon points={OUTLINE} /></clipPath>
      <filter id="soft" x="-30%" y="-30%" width="160%" height="160%"><feGaussianBlur stdDeviation="21" /></filter>
      <filter id="soft2" x="-30%" y="-30%" width="160%" height="160%"><feGaussianBlur stdDeviation="5" /></filter>
      <filter id="warp" x="0" y="0" width="100%" height="100%">
        <feTurbulence type="fractalNoise" baseFrequency=".03 .05" numOctaves="4" seed="4" result="n" />
        <feDisplacementMap in="SourceGraphic" in2="n" scale="22" xChannelSelector="R" yChannelSelector="G" />
      </filter>
      <filter id="grain" x="0" y="0" width="100%" height="100%">
        <feTurbulence type="fractalNoise" baseFrequency=".02 .16" numOctaves="3" seed="9" />
        <feColorMatrix values="0 0 0 0 .45  0 0 0 0 .35  0 0 0 0 .15  1.8 0 0 0 -.82" />
      </filter>
    </defs>
    <g transform="translate(460 250) scale(.33333)">
      <g clipPath="url(#county)">
        <g filter="url(#warp)">
          <rect x="-60" y="-40" width="1760" height="1200" fill="url(#elev)" />
          <g filter="url(#soft)">
            <path d="M150 600L250 560L330 640L400 760L400 900L330 1100H0V780z" fill="#b2dfd7" />
            <path d="M210 140L290 160L310 260L325 430L290 450L235 360L140 320z" fill="#0a8673" />
            <path d="M265 450L330 430L420 580L400 640L320 790L280 640z" fill="#6cc2b4" />
            <path d="M400 580L540 420L510 620L470 740L400 790z" fill="#b0ded6" opacity=".7" />
            <path d="M380 860L500 710L560 640L620 720L560 820L470 900L400 1060L350 1000z" fill="#f6f4ef" />
            <path d="M230 920L330 950L370 1060L190 1000z" fill="#eef3f1" />
            <path d="M560 200L700 290L640 330L560 250z" fill="#f6f3ee" />
            <path d="M170 700L220 900L190 900L160 820z" fill="#dff0ed" />
            <path d="M600 760L760 740L740 850L580 830z" fill="#e5d09c" />
            <path d="M430 850L560 800L540 880L440 950z" fill="#efe3c4" />
          </g>
          <g filter="url(#soft2)">
            <path d="M195 385L250 430L245 540L228 600L190 660L150 680L205 590L200 540L215 470z" fill="#f5f6f5" />
            <path d="M140 330L175 320L215 330L225 375L200 390L150 370z" fill="#b9e1da" />
            <path d="M120 690L186 655L180 780L166 850L156 900L130 930L60 960L0 990L70 880z" fill="url(#rift)" />
            <path d="M110 918L155 895L200 930L230 1010L40 985z" fill="#eee3c6" />
          </g>
          <path d="M265 430L275 500L268 600M320 480L310 560L325 650M250 640L280 760L300 860M205 700L240 900M300 230L310 420" stroke="#3fa896" strokeWidth="5" opacity=".3" fill="none" />
          <path d="M235 650L250 800L262 900M190 700L205 850M340 620L350 760" stroke="#eef8f6" strokeWidth="7" opacity=".3" fill="none" />
        </g>
        <g filter="url(#warp)">
          <g fill="none" strokeLinejoin="round">
            {VALLEYS.map((v, i) => <path key={i} d={v.d} stroke={v.east ? "#b98a3c" : "#eefaf8"} strokeWidth={v.east ? 1.6 : 2} opacity={v.east ? 0.22 : 0.32} />)}
            {RIVERS.map((d, i) => <path key={i} d={d} stroke="#a96f26" strokeWidth={i < 4 ? 5 : 2} opacity=".2" />)}
          </g>
        </g>
        <g transform="rotate(32 900 500)"><rect x="380" y="-300" width="1500" height="1400" filter="url(#grain)" opacity=".14" /></g>
      </g>
      <polygon points={OUTLINE} fill="none" stroke="#e2a42c" strokeWidth="3.400" strokeLinejoin="round" />
    </g>
  </svg>
);

/* ---------- right dock ---------- */
const HSplit = styled.div`height: 7px; display: flex; justify-content: center; padding: 3px 0 0 8px; flex: none; &::before { content: ""; width: 16px; height: 2px; ${dots} }`;
const StyleArea = styled.div`display: flex; height: 170px; padding: 0 3px 0 9px; margin-top: 6px; flex: none;`;
const SideTabs = styled.div`width: 38px; background: #5c5c5c; height: 169px; flex: none; display: flex; flex-direction: column;`;
const SideTab = styled.div`height: ${(p) => p.$h || 34}px; display: grid; place-items: center; padding-right: 8px; ${(p) => p.$on && "background: #f0f0f0; padding: 2px 2px 0 0;"}`;
const StyleMain = styled.div`flex: 1; display: flex; flex-direction: column; min-width: 0;`;
const Viewport = styled.div`height: 139px; display: flex; flex: none; overflow: hidden;`;
const Form = styled.div`width: 294px; padding-left: 17px; margin-top: -13px; flex: none;`;
const FormRow = styled.div`display: grid; grid-template-columns: 92px 1fr; align-items: center; height: ${(p) => p.$h || 28}px;`;
const Ramp = styled.div`flex: 1; height: 16px; background: linear-gradient(90deg, #a6611a, #dfc27d 25%, #f5f5f5 50%, #80cdc1 75%, #018571);`;
const Inline = styled.div`display: flex; gap: ${(p) => p.$gap || 0}px; align-items: center;`;
const Spin = styled.div`width: 14px; align-self: stretch; border-left: 1px solid #b5b5b5; display: flex; flex-direction: column; align-items: center; justify-content: center; gap: 2px;`;
const MiniTable = styled.div`width: 262px; border: 1px solid #b0b0b0; background: #fff; height: 60px; margin-top: 3px; margin-left: 1px;`;
const Head = styled.div`height: 19px; display: flex; border-bottom: 1px solid #b0b0b0; background: linear-gradient(#fff, #f2f2f2); ${(p) => p.$w && `width: ${p.$w}px;`}`;
const HCell = styled.div`width: ${(p) => p.$w}px; padding-left: ${(p) => (p.$c ? 0 : 1)}px; border-right: ${(p) => (p.$last ? 0 : 1)}px solid #b9b9b9; display: flex; align-items: center; justify-content: ${(p) => (p.$c ? "center" : "flex-start")}; flex: none;`;
const MiniRow = styled.div`display: flex; padding: 1px 0 0 23px; height: 44px; align-items: center;`;
const ColorCell = styled.div`width: 42px; height: 38px; margin: 0 13px 0 61px; border-radius: 5px; background: #a6611a; align-self: flex-start;`;
const Scroll = styled.div`width: 15px; border-left: 1px solid #c4c4c4; background: #e0e0e0; display: flex; flex-direction: column; flex: none;`;
const ScrollBtn = styled.div`height: 14px; background: #fafafa; display: grid; place-items: center; border: solid #c0c0c0; border-width: ${(p) => (p.$down ? "1px 0 0" : "0 0 1px")};`;
const Thumb = styled.div`height: 28px; margin-top: 12px; margin-bottom: auto; background: #fbfbfb; border: solid #bbb; border-width: 1px 0;`;
const Actions = styled.div`display: flex; align-items: center; flex: 1; padding-left: 3px; gap: 6px; padding-top: 4px;`;
const Push = styled.div`margin-left: auto; display: flex; gap: 4px; align-items: center; margin-right: 6px;`;
const ComboWrap = styled.div`padding: 1px 3px 0 9px;`;
const SpinWrap = styled.div`height: 18px; display: flex;`;

const Clear = () => (
  <svg width="13" height="10" viewBox="0 0 13 10"><path d="M4 0h9v10H4L0 5z" fill="#8d8d8d" /><path d="M5.500 2.500l5 5M10.500 2.500l-5 5" stroke="#fff" strokeWidth="1.300" /></svg>
);
const Arrows = () => <Spin><Tri dir="up" w={7} /><Tri w={7} /></Spin>;

const StylingPanel = () => (
  <>
    <DockTitle $l={10} $r={2}><Fit w={67}>Layer Styling</Fit><DockBtns /></DockTitle>
    <ComboWrap><Field $w={347} $h={24} $btn $pad="0 7px"><Inline $gap={3}><svg width="13" height="13" viewBox="0 0 14 14"><Raster /></svg><Fit w={197}>clipped_reprojected_merged_SRTM_DEM</Fit></Inline><Tri /></Field></ComboWrap>
    <StyleArea>
      <SideTabs>
        <SideTab $on $h={33}><Icon n="brushG" s={23} /></SideTab>
        <SideTab $h={34}><Icon n="transp" s={22} /></SideTab>
        <SideTab $h={27}><Icon n="histo" s={21} /></SideTab>
        <SideTab $h={38}><Icon n="render3" s={23} /></SideTab>
        <SideTab $h={24}><Icon n="hist2" s={20} /></SideTab>
      </SideTabs>
      <StyleMain>
        <Viewport>
          <Form>
            <FormRow $h={25}><Fit w={62}>Interpolation</Fit><Field $w={171} $h={21} $btn><Fit w={28}>Linear</Fit></Field></FormRow>
            <FormRow $h={28}><Fit w={52}>Color ramp</Fit><Inline $gap={1}><Field $w={158} $pad="0 3px 0 4px"><Ramp /></Field><Field $w={12} $pad="0" $justify="center"><Tri /></Field></Inline></FormRow>
            <FormRow $h={28}><Fit w={76}>Label unit suffix</Fit><Field $w={171} /></FormRow>
            <FormRow $h={28}><Fit w={70}>Label precision</Fit><Field $w={171} $h={20} $pad="0 0 0 5px"><Fit w={6}>4</Fit><Inline $gap={11}><Clear /><SpinWrap><Arrows /></SpinWrap></Inline></Field></FormRow>
            <MiniTable>
              <Head><HCell $w={100}><Fit w={26}>Value</Fit></HCell><HCell $w={59}><Fit w={25}>Color</Fit></HCell><HCell $w={90} $last><Fit w={26}>Label</Fit></HCell></Head>
              <MiniRow><Fit w={24}>1285</Fit><ColorCell /><Fit w={51} $color="#9a9a9a">1285.0000</Fit></MiniRow>
            </MiniTable>
          </Form>
          <Scroll><ScrollBtn><Tri dir="up" /></ScrollBtn><Thumb /><ScrollBtn $down><Tri /></ScrollBtn></Scroll>
        </Viewport>
        <Actions>
          <Field $w={24} $h={23} $btn $pad="0" $justify="center"><Icon n="undo" s={14} /></Field>
          <Field $w={24} $h={23} $btn $pad="0" $justify="center"><Icon n="redo" s={14} /></Field>
          <Push><Check on /><Fit w={57}>Live update</Fit></Push>
          <Field $w={80} $h={21} $btn $pad="0 2px 0 0" $justify="center"><Fit w={27}>Apply</Fit></Field>
        </Actions>
      </StyleMain>
    </StyleArea>
  </>
);

const EnableRow = styled.div`display: flex; gap: 4px; align-items: center; height: 34px; padding-left: 15px;`;
const TabArea = styled.div`padding: 0 9px 0 15px; margin-top: -1px;`;
const TabsTop = styled.div`display: flex; align-items: flex-end; height: 23px; position: relative; z-index: 1; margin-bottom: -1px;`;
const Pane = styled.div`height: 211px; border: 1px solid #b0b0b0; background: #fbfbfb; padding: 11px 10px 10px; display: flex; flex-direction: column;`;
const Grid = styled.div`width: 313px; height: 162px; border: 1px solid #b0b0b0; background: #fff; display: flex; flex-direction: column; margin-top: 7px;`;
const GridHead = styled.div`height: 19px; background: #efefef; flex: none;`;
const GridBody = styled.div`flex: 1; display: flex; background: linear-gradient(90deg, #f0f0f0 11px, #fff 11px);`;
const Cell = styled.div`
  width: ${(p) => p.$w}px; height: 30px; border: solid #b9b9b9; border-width: 0 1px 1px 0; display: flex; align-items: center;
  padding-left: ${(p) => p.$pl ?? 3}px; background: ${(p) => p.$bg || "#fff"}; flex: none;
`;
const Result = styled.div`padding: 6px 0 0 15px;`;
const SpinBox = styled.div`margin-left: 8px;`;
const HeadPad = styled.div`padding-left: 11px;`;

const ValuePanel = () => (
  <>
    <DockTitle $l={10} $r={2}><Fit w={53}>Value Tool</Fit><DockBtns /></DockTitle>
    <EnableRow><Check on /><Fit w={32}>Enable</Fit></EnableRow>
    <TabArea>
      <TabsTop>
        <Tab $on $h={23} $w={51} $first><Fit w={26}>Table</Fit></Tab>
        <Tab $h={21} $w={54} $bg="#ececec"><Fit w={29}>Graph</Fit></Tab>
        <Tab $h={21} $w={61} $bg="#ececec"><Fit w={37}>Options</Fit></Tab>
      </TabsTop>
      <Pane>
        <Inline $gap={4}><Check /><Fit w={42}>Decimals</Fit><SpinBox><Field $w={39} $h={20} $pad="0 0 0 4px"><Fit w={6}>2</Fit><SpinWrap><Arrows /></SpinWrap></Field></SpinBox></Inline>
        <Grid>
          <GridHead><Head $w={261}><HCell $c $w={211}><HeadPad><Fit w={28}>Layer</Fit></HeadPad></HCell><HCell $c $last $w={50}><Fit w={28}>Value</Fit></HCell></Head></GridHead>
          <GridBody>
            <Cell $w={11} $pl={2} $bg="#efefef"><Fit w={6}>1</Fit></Cell>
            <Cell $w={200}><Fit w={182}>clipped_reprojected_merged_SRT...</Fit></Cell>
            <Cell $w={50}><Fit w={41}>out of...</Fit></Cell>
          </GridBody>
        </Grid>
      </Pane>
    </TabArea>
    <Result><Fit w={335} $size={11}>Coordinate:282191.87002043054,9835758.981468223,out of extent</Fit></Result>
  </>
);

/* ---------- status bar ---------- */
const Status = styled.footer`height: 26px; flex: none; display: flex; flex-direction: column;`;
const StatusRow = styled.div`height: 24px; display: flex; align-items: center; padding: 6px 6px 0 4px; overflow: hidden;`;
const Gap = styled.div`width: ${(p) => p.$w}px; flex: none;`;
const Progress = styled.div`width: 170px; height: 13px; flex: none; border: 1px solid #0a5bb0; border-radius: 3px; background: repeating-linear-gradient(135deg, #0a8cf5 0 10px, #0580e6 10px 20px);`;
const SField = styled(Field)`height: 24px; align-self: flex-start; border-radius: 3px 3px 0 0; margin-top: -2px; padding-bottom: 1px;`;
const ScaleDrop = styled.div`width: 19px; align-self: stretch; border-left: 1px solid #b5b5b5; display: grid; place-items: center;`;
const Strip = styled.div`height: 2px; background: linear-gradient(90deg, #1d2b36 48px, #e6e6e6 48px 392px, #1d2b36 392px 687px, #4cd22e 687px 697px, #60676d 697px 735px, #1d2b36 735px);`;

/* label, index of the underlined letter, width */
const MENUS = [["Project", 3, 37], ["Edit", 0, 20], ["View", 0, 25], ["Layer", 0, 28], ["Settings", 0, 42], ["Plugins", 0, 39], ["Vector", 4, 33], ["Raster", 0, 32], ["Database", 0, 48], ["Web", 0, 24], ["Mesh", 0, 29], ["Processing", 3, 57], ["Help", 0, 25]];

const MenuText = ({ t, k, w }) => <Fit w={w} $size={12}>{t.slice(0, k)}<u>{t[k]}</u>{t.slice(k + 1)}</Fit>;

const ROW1 = ["newdoc", "open", "save", "layout", "layouts", "style", "::", "pan", "pansel", "zin", "zout", "zfull", "zselD", "zlayer", "znative", "zlast", "znextD", "newmap", "map3d", "bookmark", "bookmarks", "clock", "refresh", "::", "info", "tableD", "abacusD", "gear", "sigma", "measure", "V", "tips", "actionD", "v", "annot", "V"];
const ROW2 = ["datasrc", "geopkg", "shp", "spatialite", "memory", "|", "mesh", "|", "::", "pencilsD", "pencilD", "saveD", "polyD", "vertexD", "v", "modifyD", "trashD", "cutD", "copyD", "pasteD", "undoD", "redoD", "::", "tagD", "chartD", "|", "tagB", "tagR", "|", "tagPinD", "tagEyeD", "tagMoveD", "tagRotD", "tagEditD", "::", "db", "::", "hex", "globeP", "globeS", "globeBin", "::", "help", "::", "topo", "tableRef"];
const ROW3 = [
  "selD", "v", "selvalD", "v", "desel", "V", "selloc", "::", "osm",
  <Field $w={88} $btn><Fit w={31}>Ghana</Fit><Tri /></Field>, <Gap $w={1} />,
  <Field $w={108} $pad="0 2px"><Fit w={61} $color="#777">Search for…</Fit></Field>, <Gap $w={0.6} />,
  "::", "plot", "::", "gsearch", "osmdl", "::", "python", "fire", "importf", "swipe", "leaf", "earth", "bridge", "infoG", "::", "route", "::",
];
const LEFT = [["vecp"], ["rastp"], ["meshl"], ["csv"], ["feap"], ["meshp"], ["pg", 1], ["wms", 1], ["wcs"], ["wfs", 1], ["geopkg", 1]];

export default function App() {
  return (
    <Window>
      <Global />
      <TitleBar>
        <svg width="17" height="17" viewBox="0 0 16 16"><circle cx="7.800" cy="7.800" r="5.800" fill="#fff" stroke="#63a02c" strokeWidth="3.600" /><path d="M8.500 8.500l6 6.500" stroke="#93c23b" strokeWidth="3.400" /><circle cx="8.500" cy="8" r="2" fill="#ee7913" /></svg>
        <Gap $w={4} />
        <Fit w={131} $size={12}>*Untitled Project — QGIS</Fit>
        <WinButtons>
          <svg width="12" height="12"><path d="M1 6.500h11" stroke="#111" /></svg>
          <svg width="12" height="12" fill="none" stroke="#111"><rect x="1.500" y="3.500" width="7" height="7" /><path d="M3.500 3.500v-2h7v7h-2" /></svg>
          <svg width="12" height="12"><path d="M1 1l10 10M11 1L1 11" stroke="#111" strokeWidth="1.100" /></svg>
        </WinButtons>
      </TitleBar>
      <MenuBar>{MENUS.map(([t, k, w]) => <MenuText key={t} t={t} k={k} w={w} />)}</MenuBar>
      <Toolbar items={ROW1} />
      <Toolbar items={ROW2} />
      <Toolbar items={ROW3} />
      <Body>
        <LeftBar>{LEFT.map(([n, d]) => <LeftItem key={n}><Icon n={n} />{d && <Tri />}</LeftItem>)}</LeftBar>
        <Dock $w={400}>
          <DockTitle $r={3}><Fit w={33}>Layers</Fit><DockBtns /></DockTitle>
          <TreeTools>
            <TreeTool $on $w={24}><Icon n="brush" s={19} /></TreeTool>
            <TreeTool $w={26}><Icon n="groupp" s={17} /></TreeTool>
            <TreeTool><Icon n="eye" s={18} /></TreeTool>
            <TreeTool $w={24}><Icon n="filter" s={15} /></TreeTool>
            <TreeTool $w={27}><Icon n="epsD" s={17} /></TreeTool>
            <Drop $w={8}><Tri c="#a5a5a5" w={7} /></Drop>
            <TreeTool $w={32}><Icon n="expand" s={16} /></TreeTool>
            <TreeTool $w={18}><Icon n="collapse" s={16} /></TreeTool>
            <TreeTool $w={29}><Icon n="remove" s={16} /></TreeTool>
          </TreeTools>
          <Tree>{TREE.map((r, i) => <TreeRow key={i} r={r} />)}</Tree>
          <Tabs>
            <Tab $on $bottom $first $h={22} $w={56}><Fit w={33}>Layers</Fit></Tab>
            <Tab $bottom $h={20} $w={83}><Fit w={58}>Layer Order</Fit></Tab>
            <Tab $bottom $h={20} $w={63}><Fit w={39}>Browser</Fit></Tab>
          </Tabs>
        </Dock>
        <Splitter />
        <MapFrame><ReliefMap /></MapFrame>
        <Dock $w={359}>
          <StylingPanel />
          <HSplit />
          <ValuePanel />
        </Dock>
      </Body>
      <Status>
        <StatusRow>
          <SField $w={199} $pad="0 7px 0 8px" $justify="flex-start">
            <svg width="13" height="13" viewBox="0 0 13 13" fill="none" stroke="#888" strokeWidth="1.300"><circle cx="5" cy="5" r="4" /><path d="M8 8l4.500 4.500" /></svg>
            <Gap $w={6} /><Fit w={31}>merge</Fit><Gap $w={119} /><Clear />
          </SField>
          <Gap $w={175} /><Progress /><Gap $w={13} />
          <Fit w={53}>Coordinate</Fit><Gap $w={4} />
          <SField $w={97} $pad="0 6px"><Fit w={82}>282192,9835759</Fit></SField>
          <Gap $w={5} />
          <svg width="15" height="16" viewBox="0 0 15 16"><path d="M2 2l4 5M6 1l2 5M1 7l6 2M9 5l5-4M3 13l4-3M8 8l6 2" stroke="#333" strokeWidth="1.600" /><ellipse cx="8.500" cy="9.500" rx="4" ry="5" fill="#ddd" stroke="#222" strokeWidth="1.300" transform="rotate(-35 8.500 9.500)" /><path d="M6 7l5 5M8 6l4 4" stroke="#222" /></svg>
          <Gap $w={12} /><Fit w={25}>Scale</Fit><Gap $w={4} />
          <SField $w={80} $pad="0 0 0 4px"><Fit w={46}>1:703142</Fit><ScaleDrop><Tri /></ScaleDrop></SField>
          <Gap $w={12} />
          <svg width="14" height="15" viewBox="0 0 14 15"><path d="M3 8V5a4 4 0 0 1 8 0v3" fill="none" stroke="#8a8a8a" strokeWidth="1.800" /><rect x="1" y="7" width="12" height="8" rx="1" fill="#666" /></svg>
          <Gap $w={7} /><Fit w={44}>Magnifier</Fit><Gap $w={4} />
          <SField $w={88} $pad="0 0 0 4px"><Fit w={29}>100%</Fit><Arrows /></SField>
          <Gap $w={8} /><Fit w={42}>Rotation</Fit><Gap $w={9} />
          <SField $w={84} $pad="0 0 0 4px"><Fit w={25}>0.0 °</Fit><Arrows /></SField>
          <Gap $w={6} /><Check on /><Gap $w={4} /><Fit w={35}>Render</Fit><Gap $w={18} />
          <svg width="15" height="14" viewBox="0 0 15 14" fill="none" stroke="#777"><circle cx="7.500" cy="7" r="6" fill="#bbb" /><path d="M0 7h15M7.500 0v14M2 3.500h11M2 10.500h11" /><ellipse cx="7.500" cy="7" rx="3" ry="6" /></svg>
          <Gap $w={4} /><Fit w={60}>EPSG:21037</Fit><Gap $w={19} />
          <svg width="17" height="15" viewBox="0 0 17 15"><path d="M8.500.5c10 0 10 11 3 11.500l3.500 3q-4 0-6-3C-2 12-2 .5 8.500.5z" fill="#5c5c5c" /><g fill="#fff"><circle cx="5" cy="6.500" r="1.200" /><circle cx="8.500" cy="6.500" r="1.200" /><circle cx="12" cy="6.500" r="1.200" /></g></svg>
        </StatusRow>
        <Strip />
      </Status>
    </Window>
  );
}
